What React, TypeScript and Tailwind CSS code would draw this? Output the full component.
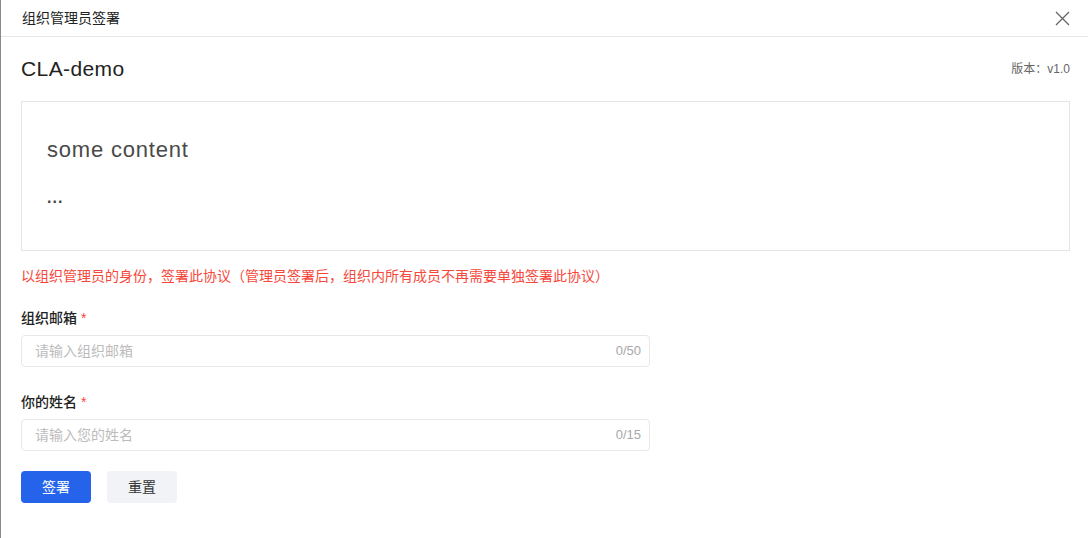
import React from "react";

const font = { fontFamily: '"Liberation Sans", "Noto Sans CJK SC", sans-serif' };

function Field({ label, placeholder, counter }: { label: string; placeholder: string; counter: string }) {
  return (
    <div className="flex flex-col">
      <div className="h-[20px] text-[14px] leading-[20px] text-[#222] font-medium">
        {label} <span className="text-[#f5483b]">*</span>
      </div>
      <div className="mt-[7px] w-[629px] h-[32px] rounded-[4px] border border-[#e8e8e8] flex items-center pl-[13px] pr-[8px]">
        <span className="flex-1 text-[14px] text-[#bcbcbc]">{placeholder}</span>
        <span className="text-[13px] text-[#a8a8a8]">{counter}</span>
      </div>
    </div>
  );
}

export default function App() {
  return (
    <div className="w-[1088px] h-[538px] bg-white border-l border-[#8a8a8a] flex flex-col overflow-hidden" style={font}>
      <div className="h-[37px] shrink-0 border-b border-[#e4e7ec] flex items-center justify-between pl-[21px] pr-[18px]">
        <span className="text-[14px] text-[#222]">组织管理员签署</span>
        <svg width="15" height="15" viewBox="0 0 15 15" className="text-[#666]">
          <path d="M1 1L14 14M14 1L1 14" stroke="currentColor" strokeWidth="1.3" />
        </svg>
      </div>
      <div className="flex flex-col pl-[20px] pr-[18px] pt-[18px]">
        <div className="h-[28px] flex items-center justify-between">
          <span className="text-[21px] tracking-[0.4px] text-[#222]">CLA-demo</span>
          <span className="text-[12px] text-[#666]">版本：v1.0</span>
        </div>
        <div className="mt-[18px] h-[150px] border border-[#e5e5e5] pl-[25px] pt-[34px]">
          <div className="text-[22px] leading-[28px] tracking-[0.8px] text-[#4a4a4a]">some content</div>
          <div className="mt-[22px] text-[16px] leading-[24px] text-[#444] font-bold tracking-[1px]">...</div>
        </div>
        <div className="mt-[15px] text-[14px] leading-[20px] text-[#f5483b]">
          以组织管理员的身份，签署此协议（管理员签署后，组织内所有成员不再需要单独签署此协议）
        </div>
        <div className="mt-[22px]">
          <Field label="组织邮箱" placeholder="请输入组织邮箱" counter="0/50" />
        </div>
        <div className="mt-[25px]">
          <Field label="你的姓名" placeholder="请输入您的姓名" counter="0/15" />
        </div>
        <div className="mt-[20px] flex gap-[16px]">
          <button className="w-[70px] h-[32px] rounded-[4px] bg-[#2563eb] text-white text-[14px]">签署</button>
          <button className="w-[70px] h-[32px] rounded-[4px] bg-[#f1f3f6] text-[#333] text-[14px]">重置</button>
        </div>
      </div>
    </div>
  );
}
